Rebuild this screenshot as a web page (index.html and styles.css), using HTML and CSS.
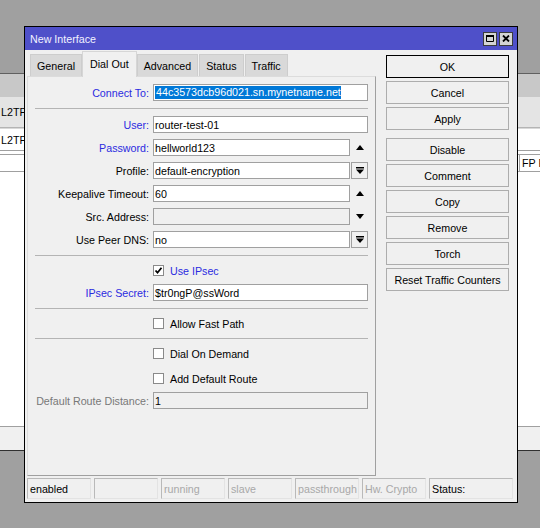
FILE: index.html
```html
<!DOCTYPE html>
<html lang="en">
<head>
    <meta charset="UTF-8">
    <title>New Interface</title>
    <link rel="stylesheet" href="styles.css">
</head>
<body>
<div class="desktop">

    <!-- list window behind the dialog -->
    <div class="list-window">
        <div class="list-toolbar"></div>
        <div class="list-tabs"><span>L2TP</span></div>
        <div class="list-row"><span>L2TP</span></div>
        <div class="list-head"><span class="col-fp">FP F</span></div>
        <div class="list-body"></div>
        <div class="list-foot"></div>
    </div>

    <div class="dialog">
        <div class="titlebar">
            <span class="title">New Interface</span>
            <div class="title-btns">
                <span class="tbtn">
                    <svg width="8" height="7" viewBox="0 0 8 7"><path d="M0.5 0.5h7v6h-7z" fill="none" stroke="#000"/><path d="M0 0h8v2H0z"/></svg>
                </span>
                <span class="tbtn">
                    <svg width="8" height="7" viewBox="0 0 8 7"><path d="M1 0.5l6 6M7 0.5l-6 6" stroke="#000" stroke-width="1.8"/></svg>
                </span>
            </div>
        </div>

        <div class="dialog-body">
            <div class="main">
                <div class="left">
                    <div class="tabs">
                        <div class="tab">General</div>
                        <div class="tab active">Dial Out</div>
                        <div class="tab">Advanced</div>
                        <div class="tab">Status</div>
                        <div class="tab">Traffic</div>
                    </div>

                    <div class="panel">
                        <div class="row">
                            <span class="lbl blue">Connect To:</span>
                            <div class="field"><span class="sel">44c3573dcb96d021.sn.mynetname.net</span></div>
                        </div>
                        <div class="sep"></div>
                        <div class="row">
                            <span class="lbl blue">User:</span>
                            <div class="field">router-test-01</div>
                        </div>
                        <div class="row">
                            <span class="lbl blue">Password:</span>
                            <div class="combo">
                                <div class="field">hellworld123</div>
                                <span class="spin"><i class="up"></i></span>
                            </div>
                        </div>
                        <div class="row">
                            <span class="lbl">Profile:</span>
                            <div class="combo">
                                <div class="field">default-encryption</div>
                                <span class="drop">
                                    <svg width="8" height="7" viewBox="0 0 8 7"><path d="M0 0h8v1.5H0z"/><path d="M0 2.5h8L4 7z"/></svg>
                                </span>
                            </div>
                        </div>
                        <div class="row">
                            <span class="lbl">Keepalive Timeout:</span>
                            <div class="combo">
                                <div class="field">60</div>
                                <span class="spin"><i class="up"></i></span>
                            </div>
                        </div>
                        <div class="row">
                            <span class="lbl">Src. Address:</span>
                            <div class="combo">
                                <div class="field off"></div>
                                <span class="spin"><i class="down"></i></span>
                            </div>
                        </div>
                        <div class="row">
                            <span class="lbl">Use Peer DNS:</span>
                            <div class="combo">
                                <div class="field">no</div>
                                <span class="drop">
                                    <svg width="8" height="7" viewBox="0 0 8 7"><path d="M0 0h8v1.5H0z"/><path d="M0 2.5h8L4 7z"/></svg>
                                </span>
                            </div>
                        </div>
                        <div class="sep"></div>
                        <div class="row check">
                            <span></span>
                            <div class="cb blue">
                                <span class="box">
                                    <svg width="9" height="9" viewBox="0 0 9 9"><path d="M1.5 4.5l2 2.2 4-5" fill="none" stroke="#000" stroke-width="1.8"/></svg>
                                </span>
                                <span>Use IPsec</span>
                            </div>
                        </div>
                        <div class="row">
                            <span class="lbl blue">IPsec Secret:</span>
                            <div class="field">$tr0ngP@ssWord</div>
                        </div>
                        <div class="sep"></div>
                        <div class="row check">
                            <span></span>
                            <div class="cb"><span class="box"></span><span>Allow Fast Path</span></div>
                        </div>
                        <div class="sep"></div>
                        <div class="row check">
                            <span></span>
                            <div class="cb"><span class="box"></span><span>Dial On Demand</span></div>
                        </div>
                        <div class="row check">
                            <span></span>
                            <div class="cb"><span class="box"></span><span>Add Default Route</span></div>
                        </div>
                        <div class="row">
                            <span class="lbl grey">Default Route Distance:</span>
                            <div class="field off">1</div>
                        </div>
                    </div>
                </div>

                <div class="buttons">
                    <button class="btn default">OK</button>
                    <button class="btn">Cancel</button>
                    <button class="btn">Apply</button>
                    <button class="btn spaced">Disable</button>
                    <button class="btn">Comment</button>
                    <button class="btn">Copy</button>
                    <button class="btn">Remove</button>
                    <button class="btn">Torch</button>
                    <button class="btn">Reset Traffic Counters</button>
                </div>
            </div>

            <div class="statusbar">
                <div class="cell">enabled</div>
                <div class="cell"></div>
                <div class="cell dim">running</div>
                <div class="cell dim">slave</div>
                <div class="cell dim">passthrough</div>
                <div class="cell dim">Hw. Crypto</div>
                <div class="cell wide">Status:</div>
            </div>
        </div>
    </div>
</div>
</body>
</html>
```

FILE: styles.css
```css
* {
    margin: 0;
    padding: 0;
    box-sizing: border-box;
}

body {
    width: 540px;
    height: 528px;
    overflow: hidden;
    background: #a0a0a0;
    font-family: "Liberation Sans", Arial, sans-serif;
    font-size: 10.7px;
    color: #000;
}

.desktop {
    position: relative;
    width: 540px;
    height: 528px;
}

/* background list window */
.list-window {
    position: absolute;
    left: 0;
    right: 0;
    top: 73px;
    height: 378px;
    display: flex;
    flex-direction: column;
    background: #fff;
    border-top: 1px solid #606060;
}

.list-toolbar {
    height: 23px;
    background: #c8c8c8;
}

.list-tabs {
    height: 31px;
    background: #e4e4e4;
    border-bottom: 1px solid #b4b4b4;
    display: flex;
    align-items: center;
    padding-left: 1px;
}

.list-row {
    height: 23px;
    display: flex;
    align-items: center;
    padding-left: 1px;
    border-top: 1px solid #d8d8d8;
    border-bottom: 1px solid #a0a0a0;
}

.list-head {
    height: 18px;
    margin-top: 3px;
    border-top: 1px solid #a0a0a0;
    border-bottom: 1px solid #a0a0a0;
    display: flex;
    justify-content: flex-end;
}

.col-fp {
    width: 21px;
    border-left: 1px solid #a0a0a0;
    padding-left: 2px;
    white-space: nowrap;
    overflow: hidden;
    line-height: 16px;
}

.list-body {
    flex: 1;
    border-bottom: 1px solid #a0a0a0;
}

.list-foot {
    height: 24px;
    background: #f0f0f0;
    border-bottom: 1px solid #303030;
}

/* dialog */
.dialog {
    position: absolute;
    left: 24px;
    top: 26px;
    width: 494px;
    height: 477px;
    border: 1px solid #000;
    background: #f0f0f0;
    display: flex;
    flex-direction: column;
}

.titlebar {
    height: 23px;
    background: #4f50c9;
    display: flex;
    align-items: center;
    justify-content: space-between;
    padding: 0 4px 0 5px;
}

.title {
    color: #f2f2ff;
}

.title-btns {
    display: flex;
    gap: 2px;
}

.tbtn {
    width: 14px;
    height: 14px;
    border: 1px solid #3c3c3c;
    background: #d4d4d4;
    display: flex;
    align-items: center;
    justify-content: center;
}

.dialog-body {
    flex: 1;
    display: flex;
    flex-direction: column;
    gap: 2px;
    padding: 1px 4px 3px 2px;
}

.main {
    height: 425px;
    display: flex;
}

.left {
    width: 349px;
    display: flex;
    flex-direction: column;
}

.tabs {
    height: 25px;
    display: flex;
    align-items: flex-end;
    padding-left: 3px;
}

.tab {
    height: 22px;
    padding: 0 6px;
    background: #d9d9d9;
    border: 1px solid #cdcdcd;
    border-bottom: none;
    display: flex;
    align-items: center;
    margin-right: 1px;
}

.tab.active {
    position: relative;
    z-index: 1;
    height: 26px;
    margin: 0 0 -1px -1px;
    padding: 0 7px 2px;
    background: #f0f0f0;
    border-color: #d6d6d6;
}

.panel {
    flex: 1;
    border: 1px solid;
    border-color: #dcdcdc #a0a0a0 #a0a0a0 #dcdcdc;
    padding: 4px 7px;
}

/* form rows */
.row {
    height: 23px;
    display: grid;
    grid-template-columns: 114px 215px;
    column-gap: 4px;
    align-items: center;
}

.row.check {
    height: 21px;
}

.row.check + .row.check {
    margin-top: 4px;
}

.lbl {
    text-align: right;
    white-space: nowrap;
}

.lbl.blue {
    color: #2b2be0;
}

.lbl.grey {
    color: #787878;
}

.field {
    height: 17px;
    border: 1px solid #a0a0a0;
    background: #fff;
    padding-left: 1px;
    display: flex;
    align-items: center;
    white-space: nowrap;
    overflow: hidden;
}

.field.off {
    background: #f0f0f0;
}

.sel {
    background: #0078d7;
    color: #fff;
    line-height: 13px;
    padding-left: 1px;
}

.combo {
    display: flex;
    gap: 1px;
}

.combo .field {
    flex: 1;
}

.spin,
.drop {
    width: 17px;
    height: 17px;
    display: flex;
    align-items: center;
    justify-content: center;
}

.drop {
    border: 1px solid #a0a0a0;
    background: #f0f0f0;
}

.up,
.down {
    width: 0;
    height: 0;
    border-left: 4px solid transparent;
    border-right: 4px solid transparent;
}

.up {
    border-bottom: 5px solid #000;
}

.down {
    border-top: 5px solid #000;
}

.sep {
    height: 1px;
    background: #b4b4b4;
    margin: 4px 0;
}

.cb {
    display: flex;
    align-items: center;
    gap: 6px;
}

.cb.blue {
    color: #2b2be0;
}

.box {
    width: 11px;
    height: 11px;
    border: 1px solid #8a8a8a;
    background: #fff;
    display: flex;
    align-items: center;
    justify-content: center;
}

/* buttons column */
.buttons {
    width: 123px;
    margin-left: 10px;
    padding-top: 4px;
    display: flex;
    flex-direction: column;
    gap: 3px;
}

.btn {
    height: 23px;
    border: 1px solid #adadad;
    background: #f0f0f0;
    font: inherit;
    color: #000;
}

.btn.default {
    border-color: #000;
}

.btn.spaced {
    margin-top: 5px;
}

/* status bar */
.statusbar {
    height: 21px;
    display: flex;
    gap: 3px;
}

.cell {
    width: 64px;
    border: 1px solid;
    border-color: #b9b9b9 #e3e3e3 #e3e3e3 #b9b9b9;
    padding-left: 2px;
    display: flex;
    align-items: center;
    white-space: nowrap;
    overflow: hidden;
}

.cell.dim {
    color: #a8a8a8;
}

.cell.wide {
    flex: 1;
}
```
